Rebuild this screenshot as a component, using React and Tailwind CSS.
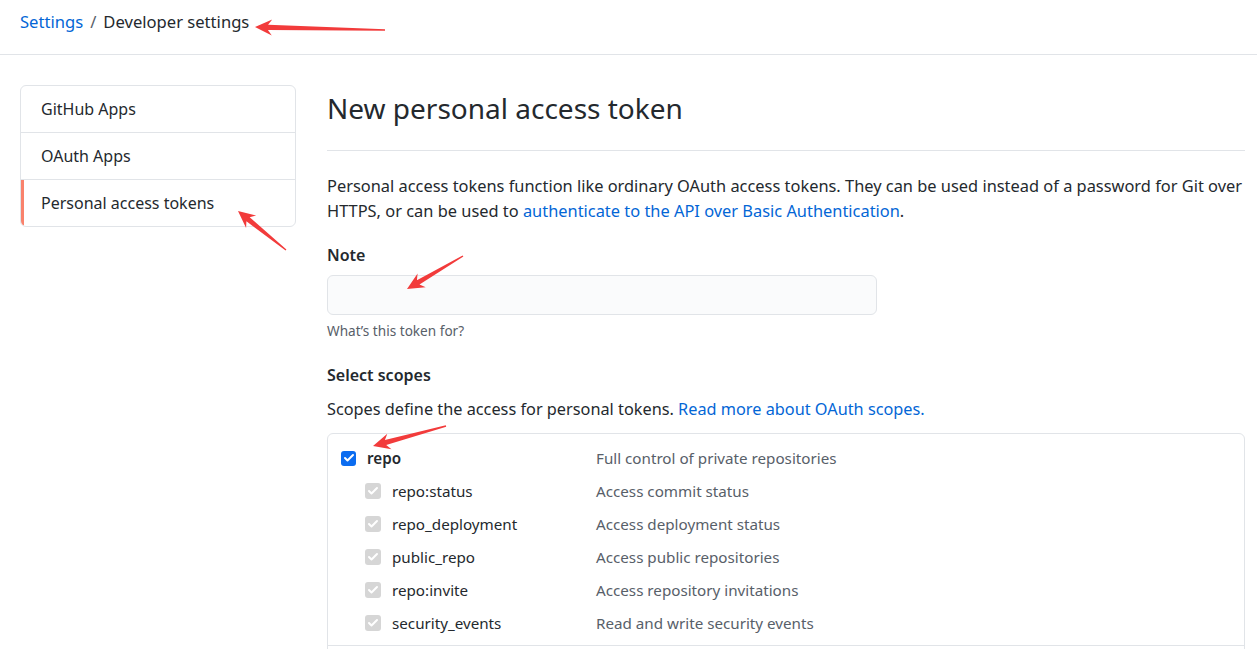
import React from "react";
import { Check } from "lucide-react";

const scopes = [
  { name: "repo:status", desc: "Access commit status" },
  { name: "repo_deployment", desc: "Access deployment status" },
  { name: "public_repo", desc: "Access public repositories" },
  { name: "repo:invite", desc: "Access repository invitations" },
  { name: "security_events", desc: "Read and write security events" },
];

// annotation arrows drawn over the screenshot
const arrows = [
  { tip: [255, 27], tail: [385, 30] },
  { tip: [238, 211], tail: [286, 250] },
  { tip: [407, 289], tail: [463, 256] },
  { tip: [373, 446], tail: [446, 426] },
];

function arrowPoints({ tip, tail }) {
  const [tx, ty] = tip;
  const [sx, sy] = tail;
  const len = Math.hypot(sx - tx, sy - ty);
  const ux = (sx - tx) / len;
  const uy = (sy - ty) / len;
  const nx = -uy;
  const ny = ux;
  const h = 17;
  const w = 8;
  const p = (a, b) => `${(tx + ux * a + nx * b).toFixed(1)},${(ty + uy * a + ny * b).toFixed(1)}`;
  const q = (b) => `${(sx + nx * b).toFixed(1)},${(sy + ny * b).toFixed(1)}`;
  return [p(0, 0), p(h, w), p(h - 4, 2.6), q(0.7), q(-0.7), p(h - 4, -2.6), p(h, -w)].join(" ");
}

function Box({ disabled }) {
  return (
    <span
      className={
        disabled
          ? "flex h-4 w-4 shrink-0 items-center justify-center rounded-[3px] bg-[#d6d6d6]"
          : "flex h-[15px] w-[15px] shrink-0 items-center justify-center rounded-[3px] bg-[#0b6cf0]"
      }
    >
      <Check size={12} strokeWidth={4} className="text-white" />
    </span>
  );
}

export default function App() {
  return (
    <div
      className="relative min-h-screen bg-white text-[#24292e]"
      style={{ fontFamily: '"Noto Sans", "Open Sans", sans-serif' }}
    >
      <header className="flex h-[55px] items-start border-b border-[#e1e4e8] px-5 pt-[9px]">
        <nav className="text-[16.6px] leading-[26px]">
          <a className="text-[#0366d6]">Settings</a>
          <span className="mx-[7px] text-[#586069]">/</span>
          <span>Developer settings</span>
        </nav>
      </header>

      <div className="flex gap-[31px] pl-5 pr-3 pt-[30px]">
        <aside className="w-[276px] shrink-0">
          <ul className="overflow-hidden rounded-md border border-[#e1e4e8] text-[16px]">
            <li className="flex h-[47px] items-center border-b border-[#e1e4e8] px-5">GitHub Apps</li>
            <li className="flex h-[47px] items-center border-b border-[#e1e4e8] px-5">OAuth Apps</li>
            <li className="flex h-[46px] items-center border-l-[3px] border-[#f9826c] pl-[17px]">
              Personal access tokens
            </li>
          </ul>
        </aside>

        <main className="min-w-0 flex-1">
          <h1 className="mt-[3px] border-b border-[#e1e4e8] pb-[22px] text-[28px] font-normal leading-[40px]">
            New personal access token
          </h1>
          <p className="mt-[22px] text-[16.4px] leading-[25px]">
            Personal access tokens function like ordinary OAuth access tokens. They can be used instead of a password
            for Git over HTTPS, or can be used to{" "}
            <a className="text-[#0366d6]">authenticate to the API over Basic Authentication</a>.
          </p>

          <div className="mt-5 text-[16px] font-semibold leading-6">Note</div>
          <div className="mt-2 h-10 w-[550px] rounded-md border border-[#e1e4e8] bg-[#fafbfc]" />
          <p className="mt-[6px] text-[13.6px] leading-5 text-[#586069]">What’s this token for?</p>

          <div className="mt-[22px] text-[16px] font-semibold leading-6">Select scopes</div>
          <p className="mt-[10px] text-[16.3px] leading-6">
            Scopes define the access for personal tokens.{" "}
            <a className="text-[#0366d6]">Read more about OAuth scopes.</a>
          </p>

          <div className="mt-3 rounded-md border border-[#e1e4e8] text-[15.2px]">
            <div className="pb-[5px] pt-2">
              <div className="flex h-[33px] items-center pl-[13px]">
                <div className="flex w-[255px] items-center gap-[11px]">
                  <Box />
                  <span className="font-semibold">repo</span>
                </div>
                <span className="text-[#586069]">Full control of private repositories</span>
              </div>
              {scopes.map((s) => (
                <div key={s.name} className="flex h-[33px] items-center pl-[13px]">
                  <div className="flex w-[255px] items-center gap-[11px] pl-6">
                    <Box disabled />
                    <span>{s.name}</span>
                  </div>
                  <span className="text-[#586069]">{s.desc}</span>
                </div>
              ))}
            </div>
            <div className="h-10 border-t border-[#e1e4e8]" />
          </div>
        </main>
      </div>

      <svg className="pointer-events-none absolute left-0 top-0 h-full w-full">
        {arrows.map((a, i) => (
          <polygon key={i} points={arrowPoints(a)} fill="#f23b3b" />
        ))}
      </svg>
    </div>
  );
}
